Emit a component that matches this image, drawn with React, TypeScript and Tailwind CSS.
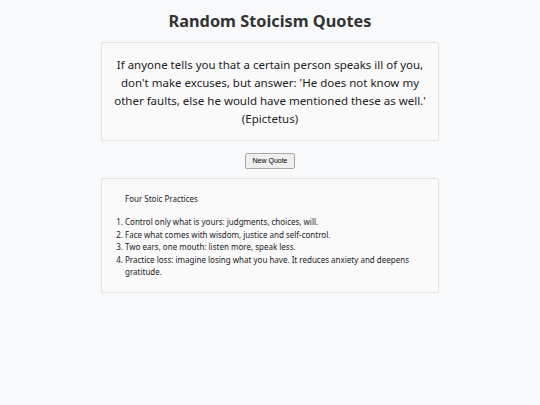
import React, { useState } from "react";

const quotes = [
  {
    text: "If anyone tells you that a certain person speaks ill of you, don't make excuses, but answer: 'He does not know my other faults, else he would have mentioned these as well.'",
    author: "Epictetus",
  },
  {
    text: "We suffer more often in imagination than in reality.",
    author: "Seneca",
  },
  {
    text: "The happiness of your life depends upon the quality of your thoughts.",
    author: "Marcus Aurelius",
  },
];

const practices = [
  "Control only what is yours: judgments, choices, will.",
  "Face what comes with wisdom, justice and self-control.",
  "Two ears, one mouth: listen more, speak less.",
  "Practice loss: imagine losing what you have. It reduces anxiety and deepens gratitude.",
];

const App = () => {
  const [index, setIndex] = useState(0);
  const quote = quotes[index];

  const nextQuote = () => {
    setIndex((i) => (i + 1) % quotes.length);
  };

  return (
    <div className="min-h-screen bg-[#f8f9fa] text-[#333] font-['Noto_Sans',sans-serif]">
      <div className="w-[338px] mx-auto flex flex-col items-center">
        <h1 className="mt-[9px] text-[16.3px] leading-[24px] font-bold text-[#333]">
          Random Stoicism Quotes
        </h1>

        <div className="mt-[9px] w-full bg-[#fafafa] border border-[#e3e3e3] rounded-[2px] px-[12px] pt-[13px] pb-[12px] text-center text-[11.5px] leading-[18px] text-[#222]">
          <p>{quote.text}</p>
          <p>({quote.author})</p>
        </div>

        <button
          onClick={nextQuote}
          className="mt-[12px] h-[16px] px-[6px] bg-[#efefef] border border-[#a9a9a9] rounded-[2px] text-[7px] leading-[14px] text-black font-['Liberation_Sans',sans-serif]"
        >
          New Quote
        </button>

        <div className="mt-[9px] w-full bg-[#fafafa] border border-[#e3e3e3] rounded-[2px] pl-[23px] pr-[24px] pt-[14px] pb-[13px] text-[8px] leading-[12.5px] text-[#222]">
          <p className="mb-[10.5px]">Four Stoic Practices</p>
          <ol className="list-decimal">
            {practices.map((p) => (
              <li key={p}>{p}</li>
            ))}
          </ol>
        </div>
      </div>
    </div>
  );
};

export default App;
